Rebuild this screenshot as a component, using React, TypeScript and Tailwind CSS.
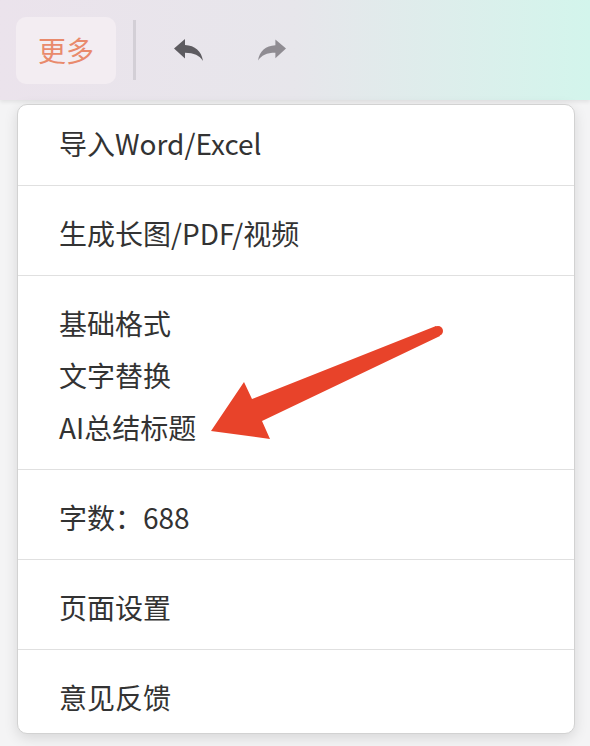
import React from 'react'

const FONT = '"Noto Sans CJK SC", "Noto Sans", sans-serif'

function UndoIcon({ className }: { className?: string }) {
  return (
    <svg viewBox="0 0 29 22" className={className} fill="currentColor">
      <path d="M0 9.5 L11 0 L11 6 C21 6.5 27.5 12 29 22 C25.5 16.5 20 13.8 11 13.8 L11 19.5 Z" />
    </svg>
  )
}

function RedoIcon({ className }: { className?: string }) {
  return (
    <svg viewBox="0 0 29 22" className={className} fill="currentColor">
      <path d="M29 9.5 L18 0 L18 6 C8 6.5 1.5 12 0 22 C3.5 16.5 9 13.8 18 13.8 L18 19.5 Z" />
    </svg>
  )
}

const sections: string[][] = [
  ['导入Word/Excel'],
  ['生成长图/PDF/视频'],
  ['基础格式', '文字替换', 'AI总结标题'],
  ['字数：688'],
  ['页面设置'],
  ['意见反馈'],
]

export default function App() {
  return (
    <div className="relative min-h-screen w-full bg-[#f4f4f5]" style={{ fontFamily: FONT }}>
      {/* toolbar */}
      <div className="flex h-[100px] items-center bg-linear-to-r from-[#ebe3ec] via-[#e7e6eb] to-[#d3f5ec] pl-[16px] shadow-[0_2px_4px_rgba(0,0,0,0.08)]">
        <button className="flex h-[67px] w-[100px] items-center justify-center rounded-[10px] bg-[#f3edf2] text-[28px] text-[#e98a6c]">
          更多
        </button>
        <div className="ml-[17px] h-[60px] w-[3px] bg-[#d3cfd6]" />
        <UndoIcon className="ml-[38px] h-[22px] w-[29px] text-[#5d5b60]" />
        <RedoIcon className="ml-[55px] h-[22px] w-[28px] text-[#8f8c92]" />
      </div>

      {/* dropdown menu */}
      <div className="ml-[17px] mt-[4px] w-[558px] overflow-hidden rounded-[10px] border border-[#d2d2d2] bg-white shadow-[0_4px_14px_rgba(0,0,0,0.12)]">
        {sections.map((items, i) => (
          <div
            key={i}
            className={
              (i > 0 ? 'border-t border-[#e0e0e0] pt-[21px] ' : 'pt-[12px] ') +
              (i === sections.length - 1 ? 'pb-[10px]' : 'pb-[16px]')
            }
          >
            {items.map((label) => (
              <div key={label} className="flex h-[52px] items-center px-[41px] text-[28px] text-[#333333]">
                {label}
              </div>
            ))}
          </div>
        ))}
      </div>

      {/* red annotation arrow */}
      <svg className="pointer-events-none absolute left-0 top-0 h-[746px] w-[590px]" viewBox="0 0 590 746">
        <path
          d="M436 326 L252 399 L244 382 L211 431 L270 439 L262 421 L440 336 Z"
          fill="#e8432a"
        />
        <circle cx="438" cy="331" r="5" fill="#e8432a" />
      </svg>
    </div>
  )
}
